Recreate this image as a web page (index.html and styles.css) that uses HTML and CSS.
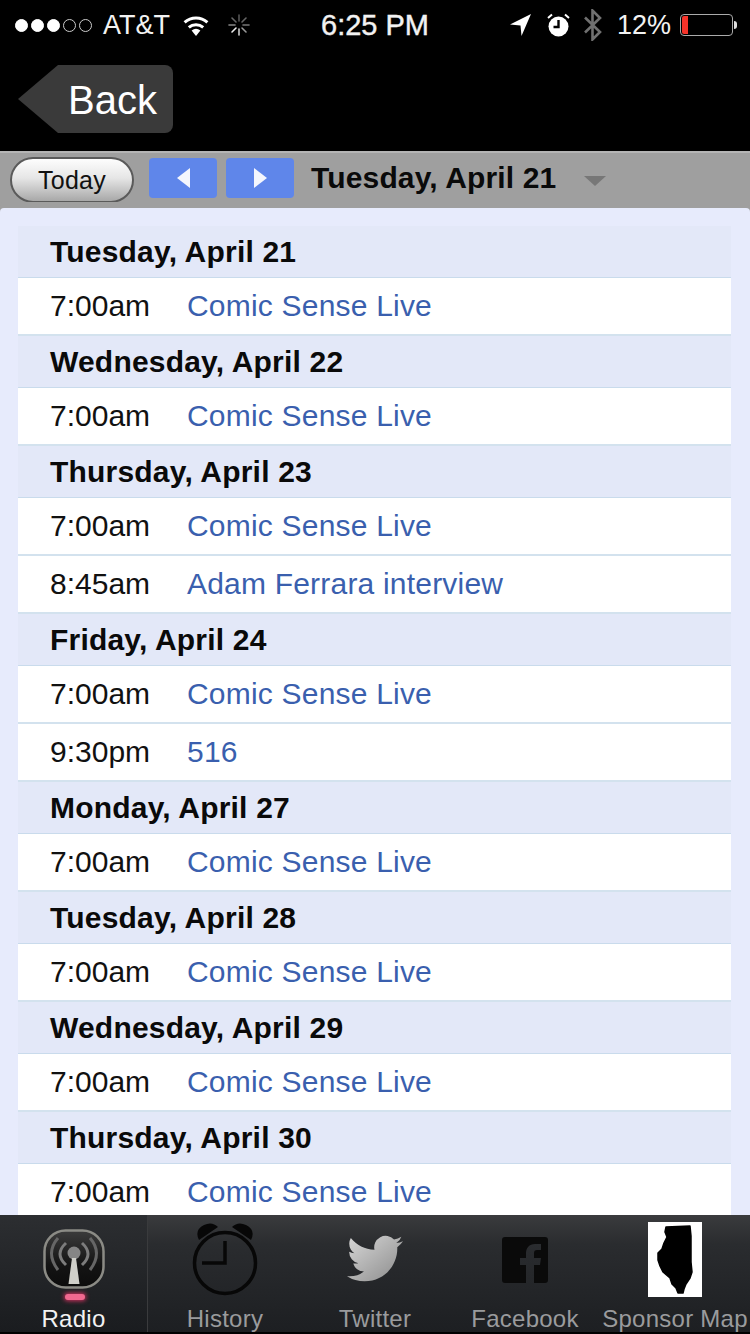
FILE: index.html
```html
<!DOCTYPE html>
<html lang="en">
<head>
    <meta charset="UTF-8">
    <meta name="viewport" content="width=device-width, initial-scale=1.0">
    <title>Radio Schedule</title>
    <link rel="stylesheet" href="styles.css">
</head>
<body>
    <div class="status-bar">
        <div class="signal">
            <span class="dot on"></span><span class="dot on"></span><span class="dot on"></span><span class="dot"></span><span class="dot"></span>
        </div>
        <span class="carrier">AT&amp;T</span>
        <svg class="wifi" width="28" height="22" viewBox="0 0 28 22">
            <path d="M14 22 L9.6 16.6 A7 7 0 0 1 18.4 16.6 Z" fill="#fff"/>
            <path d="M6.8 13.4 A11 11 0 0 1 21.2 13.4" fill="none" stroke="#fff" stroke-width="3"/>
            <path d="M2.6 8.4 A17 17 0 0 1 25.4 8.4" fill="none" stroke="#fff" stroke-width="3"/>
        </svg>
        <svg class="spinner" width="22" height="22" viewBox="0 0 22 22" stroke-width="1.6" stroke-linecap="round">
            <path d="M11 1v6" stroke="#555"/>
            <path d="M18 4l-4 4" stroke="#666"/>
            <path d="M21 11h-6" stroke="#777"/>
            <path d="M18 18l-4-4" stroke="#999"/>
            <path d="M11 21v-6" stroke="#ccc"/>
            <path d="M4 18l4-4" stroke="#eee"/>
            <path d="M1 11h6" stroke="#888"/>
            <path d="M4 4l4 4" stroke="#666"/>
        </svg>
        <span class="clock">6:25 PM</span>
        <svg class="location" width="22" height="22" viewBox="0 0 22 22">
            <path d="M21 0 L0 10.5 L10.5 11.5 L11.5 22 Z" fill="#fff"/>
        </svg>
        <svg class="alarm" width="23" height="24" viewBox="0 0 23 24">
            <circle cx="11.5" cy="13.5" r="10" fill="#fff"/>
            <path d="M11.5 7v7h-5" fill="none" stroke="#000" stroke-width="2.4"/>
            <path d="M1 5 L5 1.5 M22 5 L18 1.5" stroke="#fff" stroke-width="2"/>
        </svg>
        <svg class="bluetooth" width="18" height="32" viewBox="0 0 18 32">
            <path d="M1 8.5 L16 23 L8.5 30.5 V1.5 L16 9 L1 23.5" fill="none" stroke="#707070" stroke-width="2.6"/>
        </svg>
        <span class="percent">12%</span>
        <div class="battery"><div class="battery-level"></div></div>
        <div class="battery-nub"></div>
    </div>

    <div class="nav-bar">
        <a class="back-btn">Back</a>
    </div>

    <div class="toolbar">
        <a class="today-btn">Today</a>
        <a class="arrow-btn"><span class="tri-left"></span></a>
        <a class="arrow-btn"><span class="tri-right"></span></a>
        <span class="current-date">Tuesday, April 21</span>
        <span class="date-caret"></span>
    </div>

    <div class="content">
        <div class="day">Tuesday, April 21</div>
        <div class="event"><span class="time">7:00am</span><a class="title">Comic Sense Live</a></div>
        <div class="day">Wednesday, April 22</div>
        <div class="event"><span class="time">7:00am</span><a class="title">Comic Sense Live</a></div>
        <div class="day">Thursday, April 23</div>
        <div class="event"><span class="time">7:00am</span><a class="title">Comic Sense Live</a></div>
        <div class="event"><span class="time">8:45am</span><a class="title">Adam Ferrara interview</a></div>
        <div class="day">Friday, April 24</div>
        <div class="event"><span class="time">7:00am</span><a class="title">Comic Sense Live</a></div>
        <div class="event"><span class="time">9:30pm</span><a class="title">516</a></div>
        <div class="day">Monday, April 27</div>
        <div class="event"><span class="time">7:00am</span><a class="title">Comic Sense Live</a></div>
        <div class="day">Tuesday, April 28</div>
        <div class="event"><span class="time">7:00am</span><a class="title">Comic Sense Live</a></div>
        <div class="day">Wednesday, April 29</div>
        <div class="event"><span class="time">7:00am</span><a class="title">Comic Sense Live</a></div>
        <div class="day">Thursday, April 30</div>
        <div class="event"><span class="time">7:00am</span><a class="title">Comic Sense Live</a></div>
    </div>

    <div class="tab-bar">
        <div class="tab active">
            <svg class="tab-icon" width="66" height="64" viewBox="0 0 66 64">
                <defs>
                    <linearGradient id="radioBg" x1="0" y1="0" x2="0" y2="1">
                        <stop offset="0" stop-color="#3c3c3c"/>
                        <stop offset="0.6" stop-color="#141414"/>
                        <stop offset="1" stop-color="#0c0c0c"/>
                    </linearGradient>
                </defs>
                <rect x="3.5" y="2.5" width="59" height="57" rx="21" fill="url(#radioBg)" stroke="#8b8b85" stroke-width="2.5"/>
                <path d="M25 15 Q13 26 25 37 M41 15 Q53 26 41 37" fill="none" stroke="#7c7c7c" stroke-width="3"/>
                <path d="M17 10 Q4 25 17 42 M49 10 Q62 25 49 42" fill="none" stroke="#666" stroke-width="3"/>
                <circle cx="33" cy="25" r="6.5" fill="#858585"/>
                <path d="M31 30 H35 L38.5 56 H27.5 Z" fill="#cfcfc9"/>
            </svg>
            <span class="tab-dot"></span>
            <span class="tab-label">Radio</span>
        </div>
        <div class="tab">
            <svg class="tab-icon" width="66" height="76" viewBox="0 0 66 76">
                <circle cx="33" cy="41" r="30.5" fill="none" stroke="#070707" stroke-width="3.5"/>
                <path d="M33 19 V41 H10" fill="none" stroke="#070707" stroke-width="3.5"/>
                <path d="M7 18 Q2 8 12 3 Q20 -1 26 5 Z M59 18 Q64 8 54 3 Q46 -1 40 5 Z" fill="#070707"/>
            </svg>
            <span class="tab-label">History</span>
        </div>
        <div class="tab">
            <svg class="tab-icon" width="56" height="48" viewBox="0 0 24 20">
                <defs>
                    <linearGradient id="birdBg" x1="0" y1="0" x2="1" y2="1">
                        <stop offset="0" stop-color="#d8d8d8"/>
                        <stop offset="1" stop-color="#8a8a8a"/>
                    </linearGradient>
                </defs>
                <path transform="translate(0 -2.2)" fill="url(#birdBg)" d="M23.953 4.57a10 10 0 01-2.825.775 4.958 4.958 0 002.163-2.723c-.951.555-2.005.959-3.127 1.184a4.92 4.92 0 00-8.384 4.482C7.69 8.095 4.067 6.13 1.64 3.162a4.822 4.822 0 00-.666 2.475c0 1.71.87 3.213 2.188 4.096a4.904 4.904 0 01-2.228-.616v.06a4.923 4.923 0 003.946 4.827 4.996 4.996 0 01-2.212.085 4.936 4.936 0 004.604 3.417 9.867 9.867 0 01-6.102 2.105c-.39 0-.779-.023-1.17-.067a13.995 13.995 0 007.557 2.209c9.053 0 13.998-7.496 13.998-13.985 0-.21 0-.42-.015-.63A9.935 9.935 0 0024 4.59z"/>
            </svg>
            <span class="tab-label">Twitter</span>
        </div>
        <div class="tab">
            <svg class="tab-icon" width="46" height="46" viewBox="0 0 46 46">
                <path fill="#0a0a0a" d="M3 0H43a3 3 0 0 1 3 3V43a3 3 0 0 1-3 3H32V28h6l1-7H32V16c0-2 1-3 3-3h4V7h-6c-6 0-9 4-9 9v5h-6v7h6v18H3a3 3 0 0 1-3-3V3a3 3 0 0 1 3-3z"/>
            </svg>
            <span class="tab-label">Facebook</span>
        </div>
        <div class="tab">
            <svg class="tab-icon" width="54" height="75" viewBox="0 0 54 75">
                <rect width="54" height="75" fill="#fff"/>
                <path fill="#000" stroke="#000" stroke-width="1.5" stroke-linejoin="round" d="M18 5 L42 4 L43 14 L43 40 L44 50 L42 56 L38 62 L36 67 L35 71 L30 71 L28 66 L24 62 L22 56 L15 50 L12 44 L10 38 L10 31 L14 27 L16 21 L19 15 L17 10 Z"/>
            </svg>
            <span class="tab-label">Sponsor Map</span>
        </div>
    </div>
</body>
</html>
```

FILE: styles.css
```css
body {
    font-family: 'Liberation Sans', Arial, sans-serif;
    margin: 0;
    width: 750px;
    height: 1334px;
    overflow: hidden;
    display: flex;
    flex-direction: column;
    background: #000;
}
.status-bar {
    height: 50px;
    display: flex;
    align-items: center;
    padding-left: 15px;
    color: #f2f2f2;
    font-size: 27px;
    box-sizing: border-box;
}
.signal {
    display: flex;
    gap: 3px;
}
.dot {
    width: 13px;
    height: 13px;
    border: 1px solid #ccc;
    border-radius: 50%;
    box-sizing: border-box;
}
.dot.on {
    background: #fff;
    border-color: #fff;
}
.carrier {
    margin-left: 11px;
}
.wifi {
    margin-left: 12px;
}
.spinner {
    margin-left: 18px;
}
.clock {
    margin-left: 71px;
    font-size: 29px;
    -webkit-text-stroke: 0.4px #f2f2f2;
}
.location {
    margin-left: 81px;
}
.alarm {
    margin-left: 15px;
}
.bluetooth {
    margin-left: 14px;
}
.percent {
    margin-left: 15px;
}
.battery {
    width: 53px;
    height: 22px;
    margin-left: 9px;
    border: 1px solid #aaa;
    border-radius: 4px;
    box-sizing: border-box;
    padding: 1px;
}
.battery-level {
    width: 6px;
    height: 100%;
    background: #f5332a;
    border-radius: 2px 0 0 2px;
}
.battery-nub {
    width: 3px;
    height: 8px;
    background: #ddd;
    border-radius: 0 3px 3px 0;
    margin-left: 1px;
}
.nav-bar {
    height: 101px;
    padding: 15px 0 0 18px;
    box-sizing: border-box;
}
.back-btn {
    display: block;
    width: 155px;
    height: 68px;
    box-sizing: border-box;
    padding-left: 50px;
    line-height: 70px;
    font-size: 40px;
    color: #fff;
    background: #3a3a3a;
    border-radius: 8px;
    clip-path: polygon(40px 0, 100% 0, 100% 100%, 40px 100%, 0 50%);
}
.toolbar {
    height: 57px;
    display: flex;
    align-items: flex-start;
    background: #9f9f9f;
    border-top: 2px solid #b4b4b4;
    box-sizing: border-box;
    padding: 4px 0 0 10px;
}
.today-btn {
    width: 124px;
    height: 46px;
    box-sizing: border-box;
    border: 2px solid #5a5a5a;
    border-radius: 23px;
    background: linear-gradient(#fdfdfd, #e6e6e6 45%, #a8a8a8);
    text-align: center;
    font-size: 25px;
    letter-spacing: 0.3px;
    line-height: 43px;
    color: #111;
}
.arrow-btn {
    width: 68px;
    height: 40px;
    margin: 1px 0 0 15px;
    background: #5f86ea;
    border-radius: 4px;
    display: flex;
    align-items: center;
    justify-content: center;
}
.arrow-btn + .arrow-btn {
    margin-left: 9px;
}
.tri-left {
    border-top: 10px solid transparent;
    border-bottom: 10px solid transparent;
    border-right: 13px solid #f4f6fd;
}
.tri-right {
    border-top: 10px solid transparent;
    border-bottom: 10px solid transparent;
    border-left: 13px solid #f4f6fd;
}
.current-date {
    margin-left: 17px;
    font-size: 30px;
    font-weight: bold;
    letter-spacing: 0.15px;
    line-height: 42px;
    color: #0a0a0a;
}
.date-caret {
    margin: 19px 0 0 28px;
    border-left: 11px solid transparent;
    border-right: 11px solid transparent;
    border-top: 10px solid #777;
}
.content {
    flex: 1;
    min-height: 0;
    overflow: hidden;
    padding: 18px 19px 0 18px;
    background: #e7ebfc;
    border-radius: 4px 4px 0 0;
    box-shadow: 0 -6px 0 #9f9f9f;
}
.day {
    height: 52px;
    box-sizing: border-box;
    padding-left: 32px;
    font-size: 30px;
    font-weight: bold;
    letter-spacing: 0.2px;
    line-height: 51px;
    color: #0a0a0a;
    background: #e3e8f8;
    border-bottom: 1px solid #c9dbec;
}
.event {
    height: 58px;
    box-sizing: border-box;
    display: flex;
    padding-left: 32px;
    background: #fff;
    border-bottom: 2px solid #d3e2ee;
    font-size: 30px;
    line-height: 55px;
    color: #111;
}
.time {
    width: 137px;
}
.title {
    color: #3a5fae;
    letter-spacing: 0.2px;
}
.tab-bar {
    height: 119px;
    display: flex;
    background: linear-gradient(#3a3b3d, #2a2c2f 25%, #1d1f22);
    border-bottom: 2px solid #000;
    box-sizing: border-box;
}
.tab {
    width: 150px;
    position: relative;
    display: flex;
    flex-direction: column;
    align-items: center;
}
.tab.active {
    width: 148px;
    margin-right: 2px;
    background: linear-gradient(#2c2e31, #1a1c1f);
    border-right: 1px solid #3a3b3d;
    box-sizing: border-box;
}
.tab-icon {
    position: absolute;
    left: 50%;
    top: 0;
    transform: translateX(-50%);
}
.tab:nth-child(1) .tab-icon { top: 13px; }
.tab:nth-child(2) .tab-icon { top: 7px; }
.tab:nth-child(3) .tab-icon { top: 20px; }
.tab:nth-child(4) .tab-icon { top: 22px; }
.tab:nth-child(5) .tab-icon { top: 7px; }
.tab-dot {
    position: absolute;
    top: 79px;
    left: 65px;
    width: 20px;
    height: 6px;
    border-radius: 4px;
    background: #f0688f;
    box-shadow: 0 0 4px 1px #d0315f;
}
.tab-label {
    margin-top: 90px;
    font-size: 24px;
    letter-spacing: 0.25px;
    line-height: 27px;
    white-space: nowrap;
    color: #9a9b9d;
}
.tab.active .tab-label {
    color: #f2f2f2;
}
```
